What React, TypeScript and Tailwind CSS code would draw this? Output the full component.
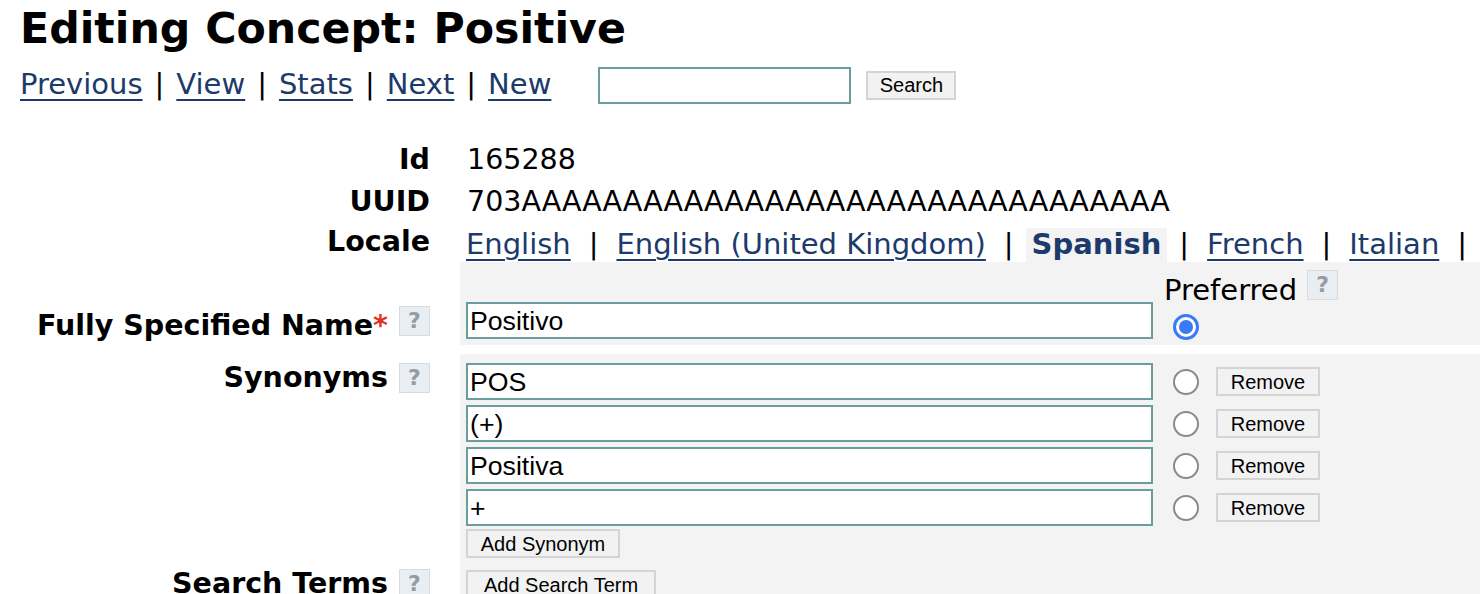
import React from "react";

const synonyms = ["POS", "(+)", "Positiva", "+"];
const locales = ["English", "English (United Kingdom)", "Spanish", "French", "Italian"];

function Help() {
  return (
    <span className="inline-flex h-[30px] w-[31px] shrink-0 items-center justify-center border border-[#d6dce1] bg-[#e9eef2] text-[22px] font-bold leading-none text-[#969ca2]">
      ?
    </span>
  );
}

function Radio({ checked }: { checked?: boolean }) {
  if (checked) {
    return (
      <span className="flex h-[26px] w-[26px] items-center justify-center rounded-full border-[3px] border-[#3a7af5] bg-white">
        <span className="h-[14px] w-[14px] rounded-full bg-[#3a7af5]" />
      </span>
    );
  }
  return <span className="block h-[26px] w-[26px] rounded-full border-2 border-[#8a8a8a] bg-white" />;
}

function Btn({ label, className }: { label: string; className?: string }) {
  return (
    <button
      className={
        "flex h-[29px] items-center justify-center border-2 border-[#d4d4d4] bg-[#f2f2f2] font-['Liberation_Sans',Arial,sans-serif] text-[20px] text-black " +
        (className || "")
      }
    >
      {label}
    </button>
  );
}

function TextBox({ value }: { value: string }) {
  return (
    <input
      readOnly
      value={value}
      className="h-[37px] w-[687px] border-2 border-[#6b9d9d] bg-white px-[2px] font-['Liberation_Sans',Arial,sans-serif] text-[26.67px] text-black outline-none"
    />
  );
}

export default function App() {
  return (
    <div className="min-h-screen overflow-hidden bg-white font-['DejaVu_Sans',Verdana,sans-serif] text-[29px] text-black">
      <h1 className="ml-5 pt-[4px] text-[42.7px] font-bold leading-[48px]">Editing Concept: Positive</h1>

      {/* barra de navegação */}
      <div className="ml-5 mt-[15px] flex h-[36px] items-center">
        {["Previous", "View", "Stats", "Next", "New"].map((l, i) => (
          <React.Fragment key={l}>
            {i > 0 && <span className="px-[12px]">|</span>}
            <a href="#" className="text-[#1c3a6b] underline underline-offset-[5px]">
              {l}
            </a>
          </React.Fragment>
        ))}
        <input className="ml-[47px] h-[37px] w-[253px] border-2 border-[#6b9d9d] outline-none" />
        <Btn label="Search" className="ml-[15px] w-[90px]" />
      </div>

      <div className="mt-[36px]">
        <div className="flex h-[42px] items-center">
          <div className="w-[430px] text-right text-[28.5px] font-bold">Id</div>
          <div className="pl-[37px] text-[28.5px]">165288</div>
        </div>
        <div className="flex h-[42px] items-center">
          <div className="w-[430px] text-right text-[28.5px] font-bold">UUID</div>
          <div className="pl-[37px] text-[28.5px]">703AAAAAAAAAAAAAAAAAAAAAAAAAAAAAAAA</div>
        </div>
        <div className="flex h-[39px]">
          <div className="flex w-[430px] items-center justify-end text-[28.5px] font-bold">Locale</div>
          <div className="ml-[30px] mt-[5px] flex items-start">
            {locales.map((l, i) => (
              <React.Fragment key={l}>
                {i > 0 && <span className="flex h-[34px] items-center px-[12px]">|</span>}
                {l === "Spanish" ? (
                  <span className="flex h-[34px] items-center bg-[#f3f3f3] px-[6px] font-bold text-[#1c3a6b]">{l}</span>
                ) : (
                  <a href="#" className="flex h-[34px] items-center px-[6px] text-[#1c3a6b]">
                    <span className="underline underline-offset-[5px]">{l}</span>
                  </a>
                )}
              </React.Fragment>
            ))}
            <span className="flex h-[34px] items-center px-[12px]">|</span>
          </div>
        </div>

        {/* nome completo */}
        <div className="flex h-[83px]">
          <div className="flex w-[460px] items-end justify-end gap-[11px] pb-[9px] pr-[30px] text-[28.5px] font-bold">
            <span className="leading-[20px]">
              Fully Specified Name<span className="text-[#e2321f]">*</span>
            </span>
            <Help />
          </div>
          <div className="flex flex-1 bg-[#f3f3f3] pl-[6px]">
            <div className="flex items-end pb-[6px]">
              <TextBox value="Positivo" />
            </div>
            <div className="ml-[11px] pt-[8px]">
              <div className="flex items-start gap-[10px]">
                <span className="leading-[40px]">Preferred</span>
                <Help />
              </div>
              <div className="ml-[9px] mt-[4px]">
                <Radio checked />
              </div>
            </div>
          </div>
        </div>

        {/* sinônimos */}
        <div className="mt-[9px] flex">
          <div className="flex w-[460px] items-start justify-end gap-[11px] pr-[30px] pt-[9px] text-[28.5px] font-bold">
            <span className="leading-[30px]">Synonyms</span>
            <Help />
          </div>
          <div className="flex-1 bg-[#f3f3f3] pb-[4px] pl-[6px] pt-[9px]">
            {synonyms.map((s, i) => (
              <div key={i} className={"flex items-center " + (i < synonyms.length - 1 ? "mb-[5px]" : "")}>
                <TextBox value={s} />
                <span className="ml-[20px]">
                  <Radio />
                </span>
                <Btn label="Remove" className="ml-[17px] w-[104px]" />
              </div>
            ))}
            <Btn label="Add Synonym" className="mt-[3px] w-[154px]" />
          </div>
        </div>

        {/* termos de busca */}
        <div className="flex">
          <div className="flex w-[460px] items-start justify-end gap-[11px] pr-[30px] pt-[7px] text-[28.5px] font-bold">
            <span className="leading-[30px]">Search Terms</span>
            <Help />
          </div>
          <div className="flex-1 bg-[#f3f3f3] pl-[6px] pt-[8px]">
            <Btn label="Add Search Term" className="w-[190px]" />
          </div>
        </div>
      </div>
    </div>
  );
}
